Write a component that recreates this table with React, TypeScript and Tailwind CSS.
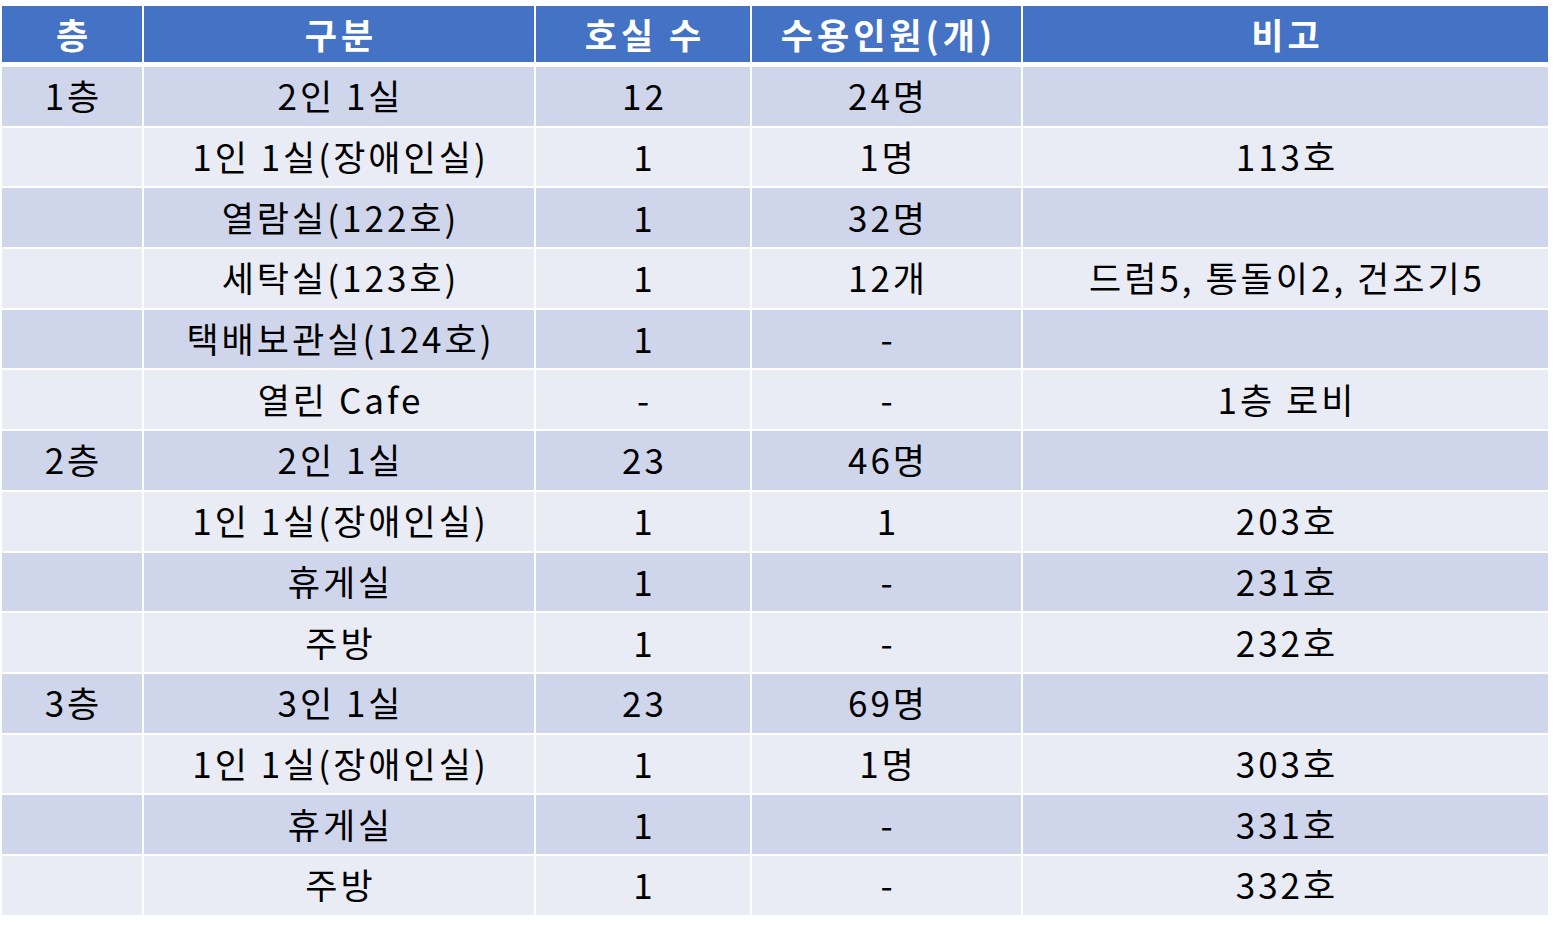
const headers = ['층', '구분', '호실 수', '수용인원(개)', '비고'];

const rows: string[][] = [
  ['1층', '2인 1실', '12', '24명', ''],
  ['', '1인 1실(장애인실)', '1', '1명', '113호'],
  ['', '열람실(122호)', '1', '32명', ''],
  ['', '세탁실(123호)', '1', '12개', '드럼5, 통돌이2, 건조기5'],
  ['', '택배보관실(124호)', '1', '-', ''],
  ['', '열린 Cafe', '-', '-', '1층 로비'],
  ['2층', '2인 1실', '23', '46명', ''],
  ['', '1인 1실(장애인실)', '1', '1', '203호'],
  ['', '휴게실', '1', '-', '231호'],
  ['', '주방', '1', '-', '232호'],
  ['3층', '3인 1실', '23', '69명', ''],
  ['', '1인 1실(장애인실)', '1', '1명', '303호'],
  ['', '휴게실', '1', '-', '331호'],
  ['', '주방', '1', '-', '332호'],
];

const cols = 'grid grid-cols-[140px_390px_214px_269px_525px] gap-x-[2px]';

export default function App() {
  return (
    <div
      className="w-[1554px] h-[931px] bg-white pt-[6px] pl-[2px]"
      style={{ fontFamily: '"Noto Sans CJK KR", "Noto Sans", sans-serif' }}
    >
      <div className={`${cols} mb-[5px]`}>
        {headers.map((h) => (
          <div
            key={h}
            className="h-[56px] bg-[#4472c4] text-white font-bold text-[35px] tracking-[4px] pl-[4px] pb-[2px] flex items-center justify-center leading-none"
          >
            {h}
          </div>
        ))}
      </div>

      <div className="flex flex-col gap-y-[2px]">
        {rows.map((row, i) => (
          <div key={i} className={cols}>
            {row.map((cell, j) => (
              <div
                key={j}
                className={`h-[58.7px] flex items-center justify-center text-[35px] tracking-[3px] pl-[3px] pb-[3px] text-black leading-none ${
                  i % 2 === 0 ? 'bg-[#cfd5ea]' : 'bg-[#e9ebf5]'
                }`}
              >
                {cell}
              </div>
            ))}
          </div>
        ))}
      </div>
    </div>
  );
}
